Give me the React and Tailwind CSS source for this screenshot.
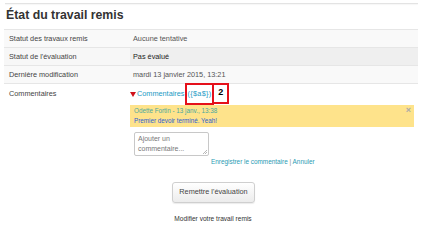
import React from "react";

const rows = [
  { label: "Statut des travaux remis", value: "Aucune tentative", labelBg: "bg-[#f9f9f9]", valueBg: "bg-[#f9f9f9]" },
  { label: "Statut de l'évaluation", value: "Pas évalué", labelBg: "bg-[#f7f7f7]", valueBg: "bg-[#efefef]", strong: true },
  { label: "Dernière modification", value: "mardi 13 janvier 2015, 13:21", labelBg: "bg-[#f9f9f9]", valueBg: "bg-[#f9f9f9]" },
];

export default function App() {
  return (
    <div className="w-[426px] h-[249px] bg-white overflow-hidden font-['Liberation_Sans',Arial,sans-serif] text-[#333]">
      {/* section rule */}
      <div className="mt-[3px] ml-[5px] w-[413px] border-t border-[#e3e3e3] shadow-[0_1px_1px_rgba(0,0,0,0.04)]"></div>

      <h2 className="ml-[6px] mt-[3px] h-[22px] text-[12.3px] leading-[16px] font-bold text-[#333]">
        État du travail remis
      </h2>

      {/* status table */}
      <div className="ml-[4px] w-[414px] border-t border-[#e6e6e6]">
        {rows.map((r) => (
          <div key={r.label} className="flex h-[18px] border-b border-[#e6e6e6] text-[7.3px] leading-[17px]">
            <div className={`w-[126px] pl-[5px] text-[#444] ${r.labelBg}`}>{r.label}</div>
            <div className={`flex-1 pl-[3px] ${r.valueBg} ${r.strong ? "text-[#222]" : "text-[#555]"}`}>{r.value}</div>
          </div>
        ))}

        {/* comments row */}
        <div className="flex text-[7.3px]">
          <div className="w-[126px] pl-[5px] pt-[5px] text-[#444]">Commentaires</div>
          <div className="flex-1 pt-[5px]">
            <div className="flex items-center h-[10px] text-[7.3px] text-[#1b9ac4]">
              <svg className="mr-[1px]" width="6" height="5" viewBox="0 0 6 5">
                <path d="M0 0H6L3 5Z" fill="#d0121b" />
              </svg>
              <span>Commentaires</span>
              <span className="relative ml-[3px] tracking-[0.3px]">
                ({"{$a$}"})
                {/* annotation boxes */}
                <span className="absolute left-[-2px] right-[-3px] top-[-6px] bottom-[-6px] border-2 border-[#e5101a]"></span>
                <span className="absolute left-[calc(100%+1px)] top-[-6px] w-[17px] h-[21px] border-2 border-[#e5101a] bg-white flex items-center justify-center text-[9px] font-bold text-black">
                  2
                </span>
              </span>
            </div>

            <div className="relative mt-[6px] w-[284px] h-[22px] bg-[#fee38b] pl-[4px] pt-[1px] text-[6.3px] leading-[10px]">
              <div className="text-[#4aa7a0]">Odette Fortin - 13 janv., 13:38</div>
              <div className="text-[#2a60d0]">Premier devoir terminé. Yeah!</div>
              <span className="absolute right-[3px] top-[1px] text-[9px] leading-[9px] font-bold text-[#aaa]">×</span>
            </div>

            <div className="relative mt-[5px] ml-[4px] w-[75px] h-[24px] border border-[#c8c8c8] rounded-[2px] bg-white px-[3px] pt-[1px] text-[7px] leading-[10px] text-[#777]">
              Ajouter un
              <br />
              commentaire...
              <svg className="absolute right-[1px] bottom-[1px]" width="4" height="4" viewBox="0 0 4 4">
                <path d="M4 0L0 4M4 2L2 4" stroke="#999" strokeWidth="0.7" />
              </svg>
            </div>

            <div className="mt-[2px] ml-[81px] text-[6.4px] leading-[8px] text-[#2a9bb3]">
              Enregistrer le commentaire <span className="text-[#888]">|</span> Annuler
            </div>
          </div>
        </div>
      </div>

      {/* actions */}
      <div className="mt-[16px] flex flex-col items-center">
        <button className="w-[83px] h-[21px] ml-[1px] border border-[#cfcfcf] rounded-[3px] bg-gradient-to-b from-white to-[#ececec] shadow-[0_1px_1px_rgba(0,0,0,0.08)] text-[7.3px] text-[#444]">
          Remettre l'évaluation
        </button>
        <div className="mt-[11px] text-[6.6px] text-[#333]">Modifier votre travail remis</div>
      </div>
    </div>
  );
}
